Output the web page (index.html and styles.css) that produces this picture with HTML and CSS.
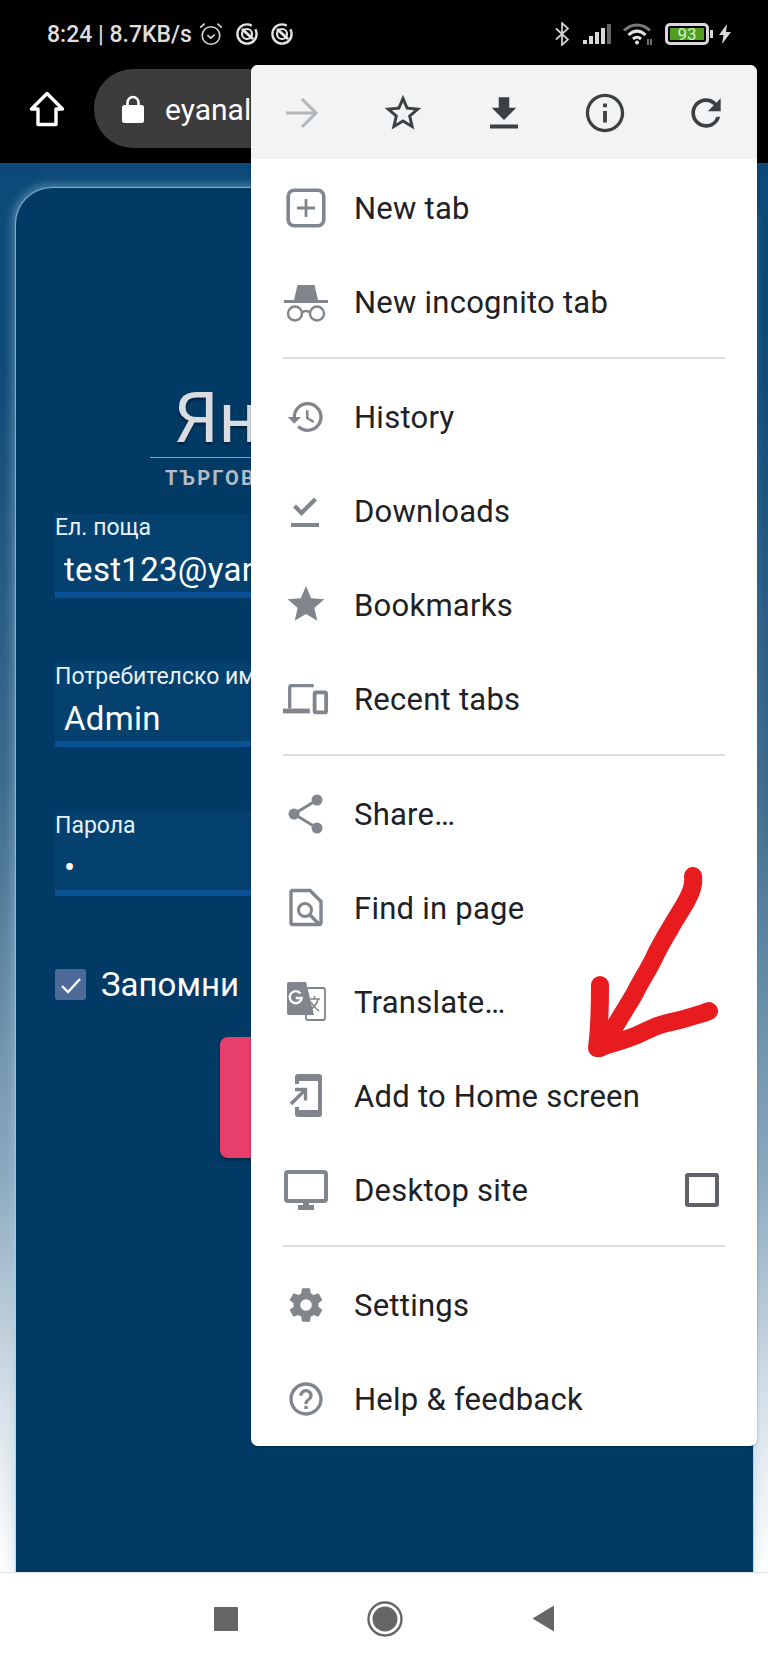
FILE: index.html
```html
<!DOCTYPE html>
<html lang="en">
<head>
  <meta charset="UTF-8" />
  <meta name="viewport" content="width=device-width, initial-scale=1" />
  <title>Chrome menu</title>
  <link rel="stylesheet" href="styles.css">
</head>
<body>
  <div class="screen">
    <div class="statusbar">
      <div class="status-left">
        <span class="status-text">8:24 | 8.7KB/s</span>
        <svg class="alarm" width="24" height="24" viewBox="0 0 24 24" fill="none" stroke="#d8d8d8" stroke-width="1.6"><circle cx="12" cy="13.5" r="8.8"/><path d="M8.4 13.2l3.4 3 3.8-3.6M1.2 5.6L5.6 1.6M22.8 5.6L18.4 1.6"/></svg>
        <svg class="dnd" width="24" height="24" viewBox="0 0 24 24" fill="none" stroke="#e4e4e4"><circle cx="12" cy="12" r="9.6" stroke-width="2.4" stroke-dasharray="50 5"/><circle cx="12" cy="12" r="5" stroke-width="2.2"/><path d="M7 7l11 10" stroke-width="3"/></svg>
        <svg class="dnd" width="24" height="24" viewBox="0 0 24 24" fill="none" stroke="#e4e4e4"><circle cx="12" cy="12" r="9.6" stroke-width="2.4" stroke-dasharray="50 5"/><circle cx="12" cy="12" r="5" stroke-width="2.2"/><path d="M7 7l11 10" stroke-width="3"/></svg>
      </div>
      <div class="status-right">
        <svg width="14" height="24" viewBox="0 0 14 24" fill="none" stroke="#cfcfcf" stroke-width="1.8"><path d="M1 6.5l12 11-6 5.5V1l6 5.5-12 11"/></svg>
        <svg class="signal" width="29" height="21" viewBox="0 0 29 21" fill="#d8d8d8"><rect x="0" y="16" width="4" height="4"/><rect x="6" y="12" width="4" height="8"/><rect x="12" y="8" width="4" height="12"/><rect x="18" y="4" width="4" height="16"/><rect x="24" y="0" width="4" height="20" fill="#666"/></svg>
        <svg class="wifi" width="30" height="24" viewBox="0 0 30 24" fill="none" stroke-width="3"><path d="M1 8.5C8.5 1 19.5 1 27 8.5" stroke="#7a7a7a"/><path d="M5.5 13C11 8 17 8 22.5 13" stroke="#e4e4e4"/><path d="M10 17c2.800-2.400 5.200-2.400 8 0" stroke="#e4e4e4"/><circle cx="14" cy="20.500" r="2" fill="#e4e4e4" stroke="none"/><path d="M25 17v6M28 17v6" stroke="#999" stroke-width="1.500"/></svg>
        <div class="battery"><div class="battery-level">93</div></div>
        <div class="battery-nub"></div>
        <svg class="bolt" width="12" height="20" viewBox="0 0 12 20" fill="#d8d8d8"><path d="M8 0L0 11h4.500L3 20l9-12H7z"/></svg>
      </div>
    </div>

    <div class="toolbar">
      <svg class="home" width="36" height="36" viewBox="0 0 36 36" fill="none" stroke="#fff" stroke-width="3.400" stroke-linejoin="round"><path d="M18 2.500L2.500 18H9v15.500h18V18h6.500z"/></svg>
      <div class="omnibox">
        <svg width="22" height="28" viewBox="0 0 22 28" fill="#fff"><path d="M5.500 11V7.500a5.500 5.500 0 0 1 11 0V11" fill="none" stroke="#fff" stroke-width="2.600"/><rect x="0" y="10" width="22" height="18" rx="2.500"/></svg>
        <span class="url">eyanal</span>
      </div>
    </div>

    <div class="page">
      <div class="card">
        <div class="logo">
          <div class="logo-mark">Ян</div>
          <div class="logo-sub">ТЪРГОВСКИ</div>
        </div>
        <div class="field">
          <label>Ел. поща</label>
          <div class="field-value">test123@yan</div>
        </div>
        <div class="field">
          <label>Потребителско име</label>
          <div class="field-value">Admin</div>
        </div>
        <div class="field">
          <label>Парола</label>
          <div class="field-value">•</div>
        </div>
        <div class="remember">
          <span class="remember-box">
            <svg width="24" height="24" viewBox="0 0 24 24" fill="none" stroke="#fff" stroke-width="2.400"><path d="M3 13l6 6L21 6"/></svg>
          </span>
          <span>Запомни</span>
        </div>
        <div class="login-btn"></div>
      </div>
    </div>

    <div class="navbar">
      <div class="nav-square"></div>
      <svg width="36" height="36" viewBox="0 0 36 36"><circle cx="18" cy="18" r="16.500" fill="none" stroke="#666" stroke-width="2.400"/><circle cx="18" cy="18" r="12.500" fill="#666"/></svg>
      <svg width="23" height="27" viewBox="0 0 23 27" fill="#666"><path d="M22 0.500v26L0.500 13.500z"/></svg>
    </div>

    <div class="menu">
      <div class="menu-head">
        <svg width="36" height="36" viewBox="0 0 36 36" fill="none" stroke="#b4b7ba" stroke-width="3"><path d="M2 18h30M18 4l14 14-14 14"/></svg>
        <svg width="44" height="44" viewBox="0 0 24 24" fill="#3c4043"><path d="M22 9.240l-7.190-.62L12 2 9.190 8.630 2 9.240l5.460 4.730L5.820 21 12 17.270 18.180 21l-1.630-7.030L22 9.240zM12 15.400l-3.760 2.270 1-4.280-3.320-2.880 4.380-.38L12 6.100l1.710 4.040 4.380.38-3.320 2.880 1 4.280L12 15.400z"/></svg>
        <svg width="42" height="42" viewBox="0 0 24 24" fill="#3c4043"><path d="M19 9h-4V3H9v6H5l7 7 7-7zM4 18.500h16v2.300H4z"/></svg>
        <svg width="46" height="46" viewBox="0 0 24 24" fill="#3c4043"><path d="M11 7h2v2h-2zm0 4h2v6h-2zm1-9C6.480 2 2 6.480 2 12s4.480 10 10 10 10-4.480 10-10S17.520 2 12 2zm0 18.300c-4.580 0-8.300-3.720-8.300-8.300S7.420 3.700 12 3.700s8.300 3.720 8.300 8.300-3.720 8.300-8.300 8.300z"/></svg>
        <svg width="44" height="44" viewBox="0 0 24 24" fill="#3c4043"><path d="M17.650 6.350A7.960 7.960 0 0 0 12 4c-4.420 0-7.990 3.580-7.990 8s3.570 8 7.990 8c3.730 0 6.840-2.550 7.730-6h-2.080A5.990 5.990 0 0 1 12 18c-3.310 0-6-2.690-6-6s2.690-6 6-6c1.660 0 3.140.69 4.220 1.780L13 11h7V4l-2.350 2.350z"/></svg>
      </div>

      <div class="menu-list">
        <div class="menu-item">
          <svg class="ic" viewBox="0 0 40 40" fill="none" stroke="#80868b"><rect x="2.200" y="2.200" width="35.600" height="35.600" rx="6" stroke-width="3.600"/><path d="M20 11v18M11 20h18" stroke-width="2.800"/></svg>
          <span>New tab</span>
        </div>
        <div class="menu-item">
          <svg class="ic" viewBox="0 0 44 40" fill="none" stroke="#80868b"><path d="M10 18L13.500 3h17L34 18z" fill="#80868b" stroke="none"/><path d="M0 19.500h44" stroke-width="3"/><circle cx="11" cy="31.500" r="7" stroke-width="2.400"/><circle cx="33" cy="31.500" r="7" stroke-width="2.400"/><path d="M18 30.500c2-2 6-2 8 0" stroke-width="2.400"/></svg>
          <span>New incognito tab</span>
        </div>
        <div class="menu-divider"></div>
        <div class="menu-item">
          <svg class="ic" viewBox="0 0 24 24" fill="#80868b"><path d="M13 3a9 9 0 0 0-9 9H1l3.890 3.890.07.140L9 12H6c0-3.870 3.130-7 7-7s7 3.130 7 7-3.130 7-7 7c-1.930 0-3.680-.79-4.940-2.060l-1.420 1.420A8.954 8.954 0 0 0 13 21a9 9 0 0 0 0-18zm-1 5v5l4.280 2.540.72-1.210-3.500-2.080V8H12z"/></svg>
          <span>History</span>
        </div>
        <div class="menu-item">
          <svg class="ic" viewBox="0 0 40 40" fill="#80868b"><path d="M12.500 24l4 4 15.500-15.500-3-3L16.500 22 11 16.500l-3 3z" transform="translate(-1 -3)"/><rect x="5" y="32" width="28" height="4"/></svg>
          <span>Downloads</span>
        </div>
        <div class="menu-item">
          <svg class="ic" viewBox="0 0 24 24" fill="#80868b"><path d="M12 17.270L18.180 21l-1.640-7.030L22 9.240l-7.190-.61L12 2 9.190 8.630 2 9.240l5.460 4.730L5.820 21z" transform="translate(-1.200 -1.600) scale(1.100)"/></svg>
          <span>Bookmarks</span>
        </div>
        <div class="menu-item">
          <svg class="ic" viewBox="0 0 48 32" fill="none" stroke="#80868b"><path d="M32 2H9a2 2 0 0 0-2 2v22" stroke-width="3.400"/><path d="M0 28.500h28" stroke-width="5"/><rect x="33" y="9" width="12" height="21" rx="1.500" stroke-width="4"/></svg>
          <span>Recent tabs</span>
        </div>
        <div class="menu-divider"></div>
        <div class="menu-item">
          <svg class="ic" viewBox="0 0 40 40" fill="#80868b"><circle cx="31" cy="6" r="5.500"/><circle cx="8" cy="20" r="5.500"/><circle cx="31" cy="34" r="5.500"/><path d="M31 6L8 20l23 14" fill="none" stroke="#80868b" stroke-width="3"/></svg>
          <span>Share…</span>
        </div>
        <div class="menu-item">
          <svg class="ic" viewBox="0 0 40 40" fill="none" stroke="#80868b"><path d="M6 3h18l11 11v21a2 2 0 0 1-2 2H6a2 2 0 0 1-1-1V4z" stroke-width="3.400" transform="translate(0 -.5)"/><circle cx="19" cy="22" r="6.500" stroke-width="3"/><path d="M24 27l9 9" stroke-width="3.400"/></svg>
          <span>Find in page</span>
        </div>
        <div class="menu-item">
          <svg class="ic" viewBox="0 0 40 40" fill="none"><rect x="20" y="6" width="19" height="32" rx="2" stroke="#80868b" stroke-width="1.800"/><path d="M3 0h17l8 33H3a2 2 0 0 1-2-2V2a2 2 0 0 1 2-2z" fill="#80868b"/><path d="M14.500 11.500a6 6 0 1 0 1.200 4.500h-6" stroke="#fff" stroke-width="2.400"/><path d="M23 17h11M28.500 14v3M32 17c-1 5-5 9-8 11M25 20c2 4 5 7 8 9" stroke="#80868b" stroke-width="1.600"/></svg>
          <span>Translate…</span>
        </div>
        <div class="menu-item">
          <svg class="ic ic-tall" viewBox="0 0 46 44" fill="#80868b"><path d="M15 0h21a3 3 0 0 1 3 3v37a3 3 0 0 1-3 3H15a3 3 0 0 1-3-3v-7h4v3h19V7H16v3h-4V3a3 3 0 0 1 3-3z"/><path d="M8 30L22 16M12 15.500h10.500v11" fill="none" stroke="#80868b" stroke-width="3.400"/></svg>
          <span>Add to Home screen</span>
        </div>
        <div class="menu-item">
          <svg class="ic" viewBox="0 0 44 40" fill="none" stroke="#80868b"><rect x="2" y="2" width="40" height="29" rx="2" stroke-width="4"/><path d="M14 37.500h16" stroke-width="5"/><path d="M22 32v5" stroke-width="6"/></svg>
          <span>Desktop site</span>
          <span class="desktop-check"></span>
        </div>
        <div class="menu-divider"></div>
        <div class="menu-item">
          <svg class="ic" viewBox="0 0 24 24" fill="#80868b"><path d="M19.430 12.980c.04-.32.070-.64.070-.98s-.030-.66-.070-.98l2.110-1.650a.5.500 0 0 0 .12-.64l-2-3.460a.5.500 0 0 0-.61-.22l-2.490 1a7.300 7.300 0 0 0-1.690-.98l-.38-2.650A.49.490 0 0 0 14 2h-4a.49.490 0 0 0-.49.420l-.38 2.650c-.61.250-1.170.590-1.690.98l-2.490-1a.49.490 0 0 0-.61.220l-2 3.460a.49.490 0 0 0 .12.640l2.110 1.650c-.04.320-.070.650-.070.980s.030.660.070.980l-2.110 1.650a.5.500 0 0 0-.12.640l2 3.460c.12.220.39.300.61.220l2.490-1c.52.400 1.080.730 1.690.98l.38 2.650c.03.240.24.420.49.420h4c.25 0 .46-.18.490-.42l.38-2.650c.61-.25 1.170-.59 1.690-.98l2.490 1c.23.090.49 0 .61-.22l2-3.460a.5.500 0 0 0-.12-.64l-2.110-1.650zM12 15.500a3.500 3.500 0 1 1 0-7 3.500 3.500 0 0 1 0 7z"/></svg>
          <span>Settings</span>
        </div>
        <div class="menu-item">
          <svg class="ic" viewBox="0 0 24 24" fill="#80868b"><path d="M11 18h2v-2h-2v2zm1-16C6.480 2 2 6.480 2 12s4.480 10 10 10 10-4.480 10-10S17.520 2 12 2zm0 18c-4.410 0-8-3.590-8-8s3.590-8 8-8 8 3.590 8 8-3.590 8-8 8zm0-14c-2.210 0-4 1.790-4 4h2c0-1.100.9-2 2-2s2 .9 2 2c0 2-3 1.750-3 5h2c0-2.250 3-2.500 3-5 0-2.210-1.790-4-4-4z"/></svg>
          <span>Help &amp; feedback</span>
        </div>
      </div>
    </div>

    <!-- hand drawn arrow on top of the screenshot -->
    <svg class="scribble" width="768" height="1664" viewBox="0 0 768 1664" fill="none" stroke="#e81c1f" stroke-width="18" stroke-linecap="round" stroke-linejoin="round">
      <path d="M693 876c1 8-1 14-4 20-5 11-12 20-18 31-6 10-12 20-17 31-5 11-14 24-19 35-8 14-17 27-26 44-3 4-5 8-9 11"/>
      <path d="M600 985c0 20 0 40-3 63"/>
      <path d="M709 1011c-7 3-13 4-22 7-9 3-18 4-27 7-10 3-19 9-28 12-10 4-22 7-34 11"/>
    </svg>
  </div>
</body>
</html>
```

FILE: styles.css
```css
* {
  box-sizing: border-box;
}
body {
  margin: 0;
  font-family: Roboto, sans-serif;
  background: #fff;
}
.screen {
  position: relative;
  width: 768px;
  height: 1664px;
  overflow: hidden;
  display: flex;
  flex-direction: column;
}

/* status bar */
.statusbar {
  height: 69px;
  background: #000;
  padding: 22px 37px 0 47px;
  display: flex;
  justify-content: space-between;
  align-items: flex-start;
}
.status-left {
  display: flex;
  align-items: center;
  height: 24px;
}
.status-text {
  color: #dedede;
  font-size: 23px;
  font-weight: 500;
  width: 152px;
  white-space: nowrap;
}
.alarm {
  margin-right: 12px;
}
.dnd {
  margin-right: 11px;
}
.status-right {
  display: flex;
  align-items: center;
  height: 24px;
}
.signal {
  margin-left: 14px;
}
.wifi {
  margin-left: 11px;
}
.battery {
  margin-left: 12px;
  width: 44px;
  height: 22px;
  border: 3px solid #d8d8d8;
  border-radius: 5px;
  padding: 2px;
}
.battery-level {
  height: 12px;
  background: #4f9e1f;
  color: #d8f0c8;
  font-size: 17px;
  line-height: 12px;
  text-align: center;
}
.battery-nub {
  width: 3px;
  height: 8px;
  margin-left: 1px;
  background: #d8d8d8;
}
.bolt {
  margin-left: 6px;
}

/* browser toolbar */
.toolbar {
  height: 94px;
  background: #000;
  display: flex;
  align-items: flex-start;
  padding-left: 29px;
}
.home {
  margin-top: 22px;
  margin-right: 29px;
}
.omnibox {
  width: 400px;
  height: 79px;
  background: #3c3c3c;
  border-radius: 39px;
  display: flex;
  align-items: center;
  padding-left: 28px;
}
.url {
  margin-left: 21px;
  margin-top: 2px;
  color: #fff;
  font-size: 30px;
}

/* page behind the menu */
.page {
  flex: 1;
  min-height: 0;
  padding: 25px 15px 0 16px;
  background: linear-gradient(#0b4a78 0%, #0f4a78 14%, #3d6b8c 44%, #8ca9be 72%, #d8e2ea 88%, #fff 100%);
}
.card {
  height: 100%;
  background: #023a66;
  border-radius: 36px 36px 0 0;
  box-shadow: 0 0 1px 1px rgba(170, 205, 230, 0.7), -1px -1px 10px 3px rgba(170, 205, 230, 0.4);
  padding: 196px 0 0 39px;
  display: flex;
  flex-direction: column;
}
.logo {
  padding-left: 95px;
  height: 130px;
}
.logo-mark {
  color: #d9dde2;
  font-size: 70px;
  font-weight: 400;
  line-height: 68px;
  padding-left: 24px;
  padding-bottom: 5px;
  border-bottom: 1px solid #8aa2b8;
  text-shadow: 0 2px 3px rgba(0, 0, 0, 0.5);
}
.logo-sub {
  color: #b4bcc6;
  font-size: 20px;
  font-weight: 700;
  line-height: 24px;
  letter-spacing: 2.200px;
  padding-left: 15px;
  margin-top: 8px;
  white-space: nowrap;
}
.field {
  height: 84px;
  margin-bottom: 65px;
  background: #04416f;
  border-bottom: 6px solid #0a5296;
}
.field label {
  display: block;
  color: #e8f2fa;
  font-size: 23px;
  line-height: 27px;
  white-space: nowrap;
}
.field-value {
  color: #fff;
  font-size: 33px;
  line-height: 40px;
  letter-spacing: 0.300px;
  padding-left: 9px;
  margin-top: 9px;
}
.remember {
  display: flex;
  align-items: center;
  height: 31px;
  color: #fff;
  font-size: 33px;
  margin-top: 8px;
}
.remember-box {
  width: 31px;
  height: 31px;
  margin-right: 15px;
  background: #4d6a99;
  border-radius: 3px;
  display: flex;
  align-items: center;
  justify-content: center;
}
.login-btn {
  width: 300px;
  height: 121px;
  margin: 37px 0 0 165px;
  background: #e83e6c;
  border-radius: 8px;
  box-shadow: 0 2px 4px rgba(0, 0, 0, 0.35);
}

/* nav bar */
.navbar {
  height: 92px;
  flex: none;
  background: #fff;
  border-top: 1px solid #dcdfe3;
  display: flex;
  align-items: center;
  justify-content: center;
  gap: 129px;
}
.nav-square {
  width: 24px;
  height: 24px;
  background: #666;
  border-radius: 1px;
}

/* overflow menu */
.menu {
  position: absolute;
  left: 251px;
  top: 65px;
  width: 506px;
  height: 1381px;
  background: #fff;
  border-radius: 7px;
  overflow: hidden;
  box-shadow: 0 1px 3px rgba(0, 0, 0, 0.25);
}
.menu-head {
  height: 94px;
  padding-top: 2px;
  background: #f1f3f4;
  display: grid;
  grid-template-columns: repeat(5, 1fr);
  align-items: center;
  justify-items: center;
}
.menu-list {
  padding-top: 2px;
}
.menu-item {
  height: 94px;
  display: flex;
  align-items: center;
  padding: 0 38px 0 32px;
  color: #202124;
  font-size: 31px;
  letter-spacing: 0.250px;
}
.ic {
  width: 46px;
  height: 40px;
  flex: none;
  margin-right: 25px;
}
.ic-tall {
  height: 44px;
}
.menu-divider {
  height: 2px;
  margin: 8px 32px 11px;
  background: #dadce0;
}
.desktop-check {
  width: 34px;
  height: 34px;
  margin-left: auto;
  border: 4px solid #5f6368;
  border-radius: 3px;
}

/* drawn over everything */
.scribble {
  position: absolute;
  left: 0;
  top: 0;
  pointer-events: none;
}
```
